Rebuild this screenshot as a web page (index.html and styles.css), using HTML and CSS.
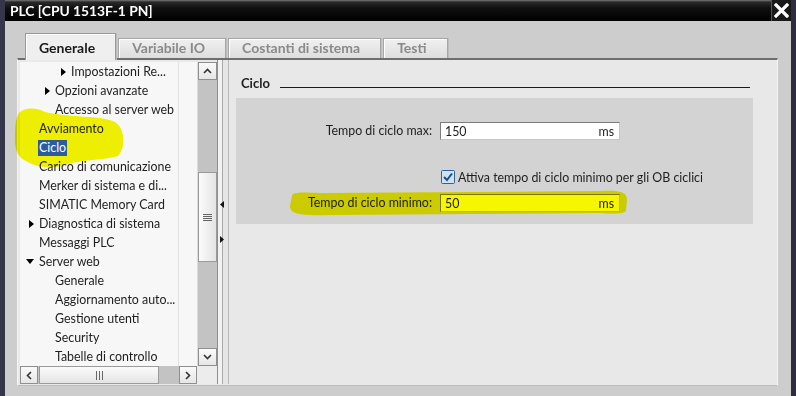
FILE: index.html
```html
<!doctype html>
<html lang="it">

<head>
  <meta charset="utf-8" />
  <meta name="viewport" content="width=device-width,initial-scale=1" />
  <title>PLC [CPU 1513F-1 PN]</title>

  <link rel="stylesheet" href="styles.css">
</head>

<body>
  <div class="window">
    <div class="titlebar">
      <span class="title">PLC [CPU 1513F-1 PN]</span>
      <span class="close">
        <svg width="15" height="15" viewBox="0 0 15 15">
          <path d="M2 2 L13 13 M13 2 L2 13" stroke="#fff" stroke-width="3.2" stroke-linecap="square" />
        </svg>
      </span>
    </div>

    <div class="dialog">
      <div class="tabs">
        <div class="tab active">Generale</div>
        <div class="tab">Variabile IO</div>
        <div class="tab">Costanti di sistema</div>
        <div class="tab">Testi</div>
      </div>

      <div class="frame">
        <div class="nav">
          <div class="nav-main">
            <div class="tree">
              <div class="row l2"><span class="arr"><svg width="5" height="8" viewBox="0 0 5 8"><path d="M0 0 L5 4 L0 8 Z" /></svg></span>Impostazioni Re...</div>
              <div class="row l1"><span class="arr"><svg width="5" height="8" viewBox="0 0 5 8"><path d="M0 0 L5 4 L0 8 Z" /></svg></span>Opzioni avanzate</div>
              <div class="row l1">Accesso al server web</div>
              <div class="row l0">Avviamento</div>
              <div class="row l0"><span class="sel">Ciclo</span></div>
              <div class="row l0">Carico di comunicazione</div>
              <div class="row l0">Merker di sistema e di...</div>
              <div class="row l0">SIMATIC Memory Card</div>
              <div class="row l0"><span class="arr"><svg width="5" height="8" viewBox="0 0 5 8"><path d="M0 0 L5 4 L0 8 Z" /></svg></span>Diagnostica di sistema</div>
              <div class="row l0">Messaggi PLC</div>
              <div class="row l0"><span class="arr down"><svg width="8" height="5" viewBox="0 0 8 5"><path d="M0 0 L8 0 L4 5 Z" /></svg></span>Server web</div>
              <div class="row l1">Generale</div>
              <div class="row l1">Aggiornamento auto...</div>
              <div class="row l1">Gestione utenti</div>
              <div class="row l1">Security</div>
              <div class="row l1">Tabelle di controllo</div>
            </div>
            <div class="vscroll">
              <div class="sbtn">
                <svg width="9" height="6" viewBox="0 0 9 6"><path d="M1 5 L4.5 1.5 L8 5" fill="none" stroke="#333" stroke-width="1.6" /></svg>
              </div>
              <div class="vtrack">
                <div class="vthumb">
                  <svg width="9" height="7" viewBox="0 0 9 7"><path d="M0 0.5 H9 M0 2.5 H9 M0 4.5 H9 M0 6.5 H9" stroke="#666" stroke-width="1" /></svg>
                </div>
              </div>
              <div class="sbtn">
                <svg width="9" height="6" viewBox="0 0 9 6"><path d="M1 1 L4.5 4.5 L8 1" fill="none" stroke="#333" stroke-width="1.6" /></svg>
              </div>
            </div>
          </div>
          <div class="nav-bottom">
            <div class="hscroll">
              <div class="sbtn side">
                <svg width="6" height="9" viewBox="0 0 6 9"><path d="M5 1 L1.5 4.5 L5 8" fill="none" stroke="#333" stroke-width="1.6" /></svg>
              </div>
              <div class="hthumb">
                <svg width="7" height="9" viewBox="0 0 7 9"><path d="M0.5 0 V9 M3.5 0 V9 M6.5 0 V9" stroke="#666" stroke-width="1" /></svg>
              </div>
              <div class="htrack"></div>
              <div class="sbtn side">
                <svg width="6" height="9" viewBox="0 0 6 9"><path d="M1 1 L4.5 4.5 L1 8" fill="none" stroke="#333" stroke-width="1.6" /></svg>
              </div>
            </div>
            <div class="corner"></div>
          </div>
        </div>

        <div class="splitter">
          <svg width="4" height="7" viewBox="0 0 4 7"><path d="M4 0 L0 3.5 L4 7 Z" /></svg>
          <svg width="4" height="7" viewBox="0 0 4 7"><path d="M0 0 L4 3.5 L0 7 Z" /></svg>
        </div>

        <div class="props">
          <div class="section-title">
            <span>Ciclo</span>
            <span class="rule"></span>
          </div>
          <div class="section">
            <div class="label">Tempo di ciclo max:</div>
            <div class="field"><span>150</span><span>ms</span></div>

            <div class="check-row">
              <svg class="check" width="14" height="14" viewBox="0 0 14 14">
                <rect x="0.5" y="0.5" width="13" height="13" rx="1" fill="#cfe2f4" stroke="#2f6296" />
                <path d="M3 7 L6 10 L11 3.5" fill="none" stroke="#1c4d86" stroke-width="2" />
              </svg>
              <span>Attiva tempo di ciclo minimo per gli OB ciclici</span>
            </div>

            <div class="label">Tempo di ciclo minimo:</div>
            <div class="field"><span>50</span><span>ms</span></div>
          </div>
        </div>
      </div>
    </div>
  </div>

  <!-- evidenziatore giallo disegnato sopra la schermata -->
  <svg class="marker" width="796" height="396" viewBox="0 0 796 396">
    <path d="M18 115 C20 108 35 106 45 112 C70 118 100 115 115 122 C125 128 126 148 118 156 C105 160 80 160 68 164 C55 169 38 168 28 162 C18 158 14 150 15 135 C15 125 16 119 18 115 Z" />
    <path d="M292 196 C292 192 300 192 320 193 L600 191 C620 190 627 192 627 200 L626 210 C626 214 615 214 600 213 L330 215 C300 216 290 214 290 206 Z" />
  </svg>
</body>

</html>
```

FILE: styles.css
```css
html,
body {
  margin: 0;
  padding: 0;
}

body {
  width: 796px;
  height: 396px;
  position: relative;
  overflow: hidden;
  font-family: Lato, "Noto Sans", sans-serif;
  font-size: 12.4px;
  color: #1e1e1e;
}

.window {
  box-sizing: border-box;
  width: 796px;
  height: 396px;
  display: flex;
  flex-direction: column;
  background: #cdcdcd;
  border-left: 5px solid #37354a;
  border-right: 5px solid #2e2c3e;
}

.titlebar {
  height: 21px;
  display: flex;
  align-items: center;
  justify-content: space-between;
  padding-left: 5px;
  background: linear-gradient(#7a7a7a 0, #2a2a2a 2px, #101010 8px, #000 100%);
  color: #fff;
  font-size: 13.8px;
  font-weight: bold;
}

.close {
  box-sizing: border-box;
  width: 20px;
  height: 21px;
  display: flex;
  align-items: center;
  justify-content: center;
  border-left: 1px solid #555;
  background: #181818;
}

.dialog {
  flex: 1;
  display: flex;
  flex-direction: column;
  padding: 12px 13px 11px 12px;
}

.tabs {
  height: 25px;
  display: flex;
  align-items: flex-end;
  padding-left: 8px;
}

.tab {
  box-sizing: border-box;
  height: 20px;
  line-height: 18px;
  padding: 0 20px 0 13px;
  margin-right: 2px;
  border: 1px solid #a6a6a6;
  border-bottom: none;
  box-shadow: inset 1px 1px 0 #fff, 1px 0 0 #bdbdbd;
  background: linear-gradient(#f0f0f0, #dedede);
  color: #8a8a8a;
  font-size: 14px;
  font-weight: bold;
  white-space: nowrap;
}

.tab.active {
  position: relative;
  z-index: 1;
  height: 27px;
  margin-bottom: -2px;
  padding-top: 4px;
  line-height: 20px;
  border-color: #999;
  background: #efefef;
  color: #1a1a1a;
}

.frame {
  flex: 1;
  display: flex;
  border-top: 2px solid #6e6e6e;
  border-left: 1px solid #f4f4f4;
  border-right: 1px solid #f4f4f4;
  border-bottom: 1px solid #bcbcbc;
  padding: 2px 0 1px 2px;
  background: #e9e9e9;
}

.nav {
  width: 197px;
  display: flex;
  flex-direction: column;
}

.nav-main {
  flex: 1;
  display: flex;
  min-height: 0;
}

.tree {
  flex: 1;
  overflow: hidden;
  background: linear-gradient(to right, transparent 158px, #e2e2e2 158px, #e2e2e2 159px, transparent 159px), #f7f7f7;
}

.row {
  height: 19px;
  line-height: 19px;
  display: flex;
  align-items: center;
  white-space: nowrap;
}

.row.l0 {
  padding-left: 19px;
}

.row.l1 {
  padding-left: 35px;
}

.row.l2 {
  padding-left: 51px;
}

.arr {
  width: 11px;
  margin-left: -11px;
  display: flex;
  align-items: center;
  padding-left: 1px;
  box-sizing: border-box;
}

.arr.down {
  margin-left: -14px;
  width: 14px;
}

.sel {
  position: relative;
  z-index: 2;
  margin-left: -1px;
  padding: 0 1px;
  line-height: 16px;
  background: #2d5c9e;
  color: #fff;
}

.vscroll {
  width: 19px;
  display: flex;
  flex-direction: column;
  background: #c3c3c3;
  border-left: 1px solid #dcdcdc;
}

.sbtn {
  box-sizing: border-box;
  height: 18px;
  display: flex;
  align-items: center;
  justify-content: center;
  border: 1px solid #8f8f8f;
  background: linear-gradient(#fafafa, #e6e6e6);
}

.vtrack {
  flex: 1;
  padding-top: 92px;
}

.vthumb {
  box-sizing: border-box;
  height: 90px;
  display: flex;
  align-items: center;
  justify-content: center;
  border: 1px solid #9a9a9a;
  background: linear-gradient(to right, #fbfbfb, #e4e4e4);
}

.nav-bottom {
  height: 18px;
  display: flex;
}

.hscroll {
  flex: 1;
  display: flex;
  background: #c3c3c3;
}

.sbtn.side {
  width: 18px;
  height: 18px;
}

.hthumb {
  box-sizing: border-box;
  width: 120px;
  margin-left: 1px;
  display: flex;
  align-items: center;
  justify-content: center;
  border: 1px solid #9a9a9a;
  background: linear-gradient(#fbfbfb, #e4e4e4);
}

.htrack {
  flex: 1;
}

.corner {
  width: 20px;
  background: #ececec;
}

.splitter {
  box-sizing: border-box;
  width: 12px;
  display: flex;
  flex-direction: column;
  align-items: center;
  justify-content: center;
  gap: 28px;
  margin-top: -2px;
  border-left: 1px solid #8e8e8e;
  border-right: 1px solid #b8b8b8;
  background: linear-gradient(to right, #f2f2f2 0, #f2f2f2 4px, #a9a9a9 4px, #a9a9a9 5px, #e6e6e6 5px);
  padding-right: 3px;
}

.splitter svg {
  fill: #111;
}

.props {
  flex: 1;
  margin-top: -2px;
  padding: 15px 24px 0 12px;
  background: #e8e8e8;
}

.section-title {
  display: flex;
  align-items: flex-end;
  font-size: 13px;
  font-weight: bold;
  line-height: 16px;
}

.rule {
  flex: 1;
  height: 1px;
  margin: 0 3px 3px 10px;
  background: #1a1a1a;
}

.section {
  display: grid;
  grid-template-columns: 196px 180px;
  column-gap: 8px;
  row-gap: 8px;
  margin: 7px 0 0 -5px;
  padding: 24px 0 12px;
  background: #d3d3d3;
}

.label {
  text-align: right;
  line-height: 18px;
  white-space: nowrap;
}

.field {
  box-sizing: border-box;
  height: 18px;
  display: flex;
  justify-content: space-between;
  align-items: center;
  padding: 0 5px 0 4px;
  border: 1px solid;
  border-color: #7c7c7c #c6c6c6 #c6c6c6 #7c7c7c;
  background: #fff;
}

.check-row {
  grid-column: 2;
  margin-top: 20px;
  height: 18px;
  display: flex;
  align-items: center;
  gap: 3px;
  padding-left: 1px;
  white-space: nowrap;
}

.check {
  flex: none;
}

.marker {
  position: absolute;
  top: 0;
  left: 0;
  z-index: 1;
  pointer-events: none;
  mix-blend-mode: multiply;
  fill: #f6f600;
}
```
